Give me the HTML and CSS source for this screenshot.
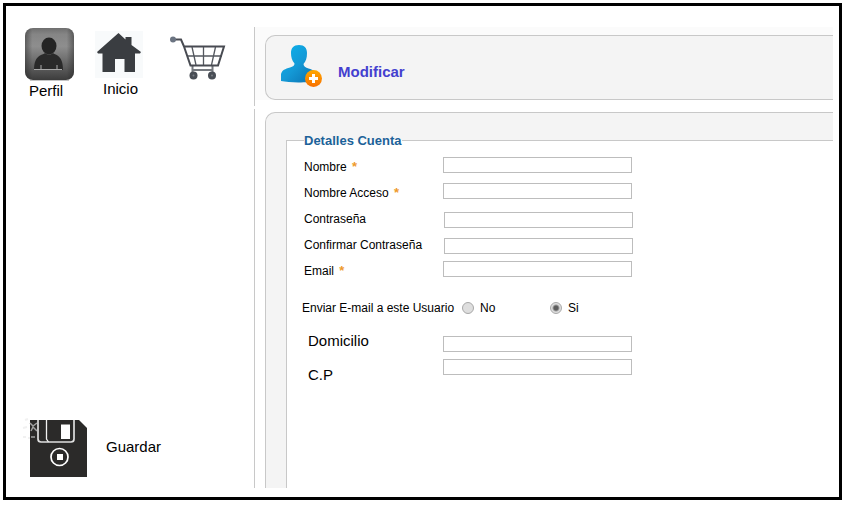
FILE: index.html
```html
<!DOCTYPE html>
<html lang="es">
<head>
<meta charset="utf-8">
<title>Modificar</title>
<link rel="stylesheet" href="styles.css">
</head>
<body>
<form class="frame">
  <aside class="sidebar">
    <nav class="nav">
      <a class="nav-item" href="#perfil">
        <svg width="49" height="55" viewBox="25 27 49 55" aria-hidden="true">
          <defs>
            <linearGradient id="tile" x1="0" y1="0" x2="0" y2="1">
              <stop offset="0" stop-color="#6f6f6f"/>
              <stop offset=".12" stop-color="#858585"/>
              <stop offset=".35" stop-color="#8e8e8e"/>
              <stop offset=".75" stop-color="#5e5e5e"/>
              <stop offset="1" stop-color="#3c3c3c"/>
            </linearGradient>
            <linearGradient id="edge" x1="0" y1="0" x2="1" y2="0">
              <stop offset="0" stop-color="#222" stop-opacity=".45"/>
              <stop offset=".15" stop-color="#222" stop-opacity="0"/>
              <stop offset=".85" stop-color="#222" stop-opacity="0"/>
              <stop offset="1" stop-color="#222" stop-opacity=".45"/>
            </linearGradient>
          </defs>
          <rect x="25" y="28" width="49" height="52" rx="8" fill="url(#tile)"/>
          <rect x="25" y="28" width="49" height="52" rx="8" fill="url(#edge)"/>
          <ellipse cx="49" cy="46" rx="7.5" ry="8.500" fill="#242424"/>
          <path d="M34 70c0-8 2-12 6-14.500 2-1.200 4-1.500 5-2.500 2.500 2 5.500 2 8 0 1 1 3 1.300 4.500 2.500 3.500 2.500 5.500 6.500 5.500 14.500z" fill="#2a2a2a"/>
          <path d="M34 69.500h28M41 65v4M57 65v4" stroke="#aaa" fill="none"/>
          <path d="M30 80.500h39" stroke="#c4c4c4"/>
        </svg>
        <span class="nav-label">Perfil</span>
      </a>
      <a class="nav-item" href="#inicio">
        <svg width="53" height="53" viewBox="95 27 53 53" aria-hidden="true">
          <rect x="95" y="31" width="48" height="47" fill="#f8fafb"/>
          <path d="M118.500 33l7 6.500V37h6v8l9.500 7-1 1.500h-5V72h-10.500V59h-9.500v13H102.500V53.500H98L97 52z" fill="#3a3d41"/>
        </svg>
        <span class="nav-label nav-label-wide">Inicio</span>
      </a>
      <a class="nav-item" href="#carrito" aria-label="Carrito">
        <svg width="57" height="54" viewBox="169 27 57 54" aria-hidden="true" fill="none">
          <path d="M192.500 66v8M212.500 66v8M193 70h20" stroke="#75797f" stroke-width="2"/>
          <path d="M187 56h35M192 47l4 18M203.500 47v18M215.500 47l-4 18" stroke="#54585f" stroke-width="1.300"/>
          <path d="M174 39.500h7l3 7h40l-6 19h-27.500l-6.500-19" stroke="#484b52" stroke-width="2"/>
          <circle cx="173" cy="39.500" r="3" fill="#6b7482"/>
          <circle cx="193.500" cy="75.500" r="4" fill="#484d55"/>
          <circle cx="212" cy="75.500" r="4" fill="#484d55"/>
          <circle cx="193.500" cy="75.500" r="1" fill="#7b7f86"/>
          <circle cx="212" cy="75.500" r="1" fill="#7b7f86"/>
        </svg>
      </a>
    </nav>
    <button class="save" type="submit">
      <svg width="65" height="64" viewBox="22 415 65 64" aria-hidden="true" fill="none">
        <path d="M30 420h49l8 8v49H30z" fill="#2b2a29"/>
        <path d="M25 420l3-1M23 428l4-1M23 437h3M28 438h2" stroke="#f1f1f1" stroke-width="2"/>
        <path d="M30 423l3 3 4-3M31 431l2-4 4 4M31 437h4" stroke="#a0a0a0" stroke-width="1.500"/>
        <path d="M38 420v19q0 3 3 3h30q3 0 3-3v-19" stroke="#dedede" stroke-width="1.700"/>
        <path d="M46.500 420v19l2 3" stroke="#f2f2f2" stroke-width="1.300"/>
        <path d="M61 424.500h9V439h-9z" fill="#fff"/>
        <circle cx="59.500" cy="457" r="8.500" stroke="#fff" stroke-width="1.700"/>
        <path d="M57 454h6v6h-6z" fill="#fff"/>
      </svg>
      <span>Guardar</span>
    </button>
  </aside>
  <main class="main">
    <header class="top">
      <div class="top-band">
        <div class="title-card">
          <svg width="43" height="43" viewBox="281 44 43 43" aria-hidden="true">
            <defs>
              <linearGradient id="person" x1="0" y1="0" x2="1" y2="1">
                <stop offset="0" stop-color="#0ab4ee"/>
                <stop offset=".5" stop-color="#1499d6"/>
                <stop offset="1" stop-color="#0a6cab"/>
              </linearGradient>
              <linearGradient id="badge" x1="0" y1="0" x2="0" y2="1">
                <stop offset="0" stop-color="#ffa800"/>
                <stop offset="1" stop-color="#f87000"/>
              </linearGradient>
            </defs>
            <path d="M299 45c5.500 0 8 3 8 8 0 5-1 8-3.500 11 0 2.500 2 3.500 5 4.500 5 1.500 8.500 3.500 8.500 9v3c-8 2.500-27 2.500-36 .500V74c1-4 4-5 9-6.500 3-1 4.500-1.500 4.500-4-2.500-3-3.500-6-3.500-10.500 0-5 2.500-8 8-8z" fill="url(#person)"/>
            <circle cx="313.500" cy="78.500" r="8.500" fill="url(#badge)"/>
            <path d="M313.500 74v9M309 78.500h9" stroke="#fff" stroke-width="3"/>
          </svg>
          <h1 class="title">Modificar</h1>
        </div>
      </div>
    </header>
    <section class="content">
      <div class="panel">
        <fieldset class="account">
          <legend>Detalles Cuenta</legend>
          <div class="field required">
            <label for="nombre">Nombre <b class="star">*</b></label>
            <input class="box" id="nombre" type="text">
          </div>
          <div class="field required">
            <label for="acceso">Nombre Acceso <b class="star">*</b></label>
            <input class="box" id="acceso" type="text">
          </div>
          <div class="field optional">
            <label for="clave">Contraseña</label>
            <input class="box" id="clave" type="password">
          </div>
          <div class="field optional">
            <label for="clave2">Confirmar Contraseña</label>
            <input class="box" id="clave2" type="password">
          </div>
          <div class="field required">
            <label for="email">Email <b class="star">*</b></label>
            <input class="box" id="email" type="email">
          </div>
          <div class="choice" role="radiogroup" aria-labelledby="enviar">
            <span id="enviar">Enviar E-mail a este Usuario</span>
            <label class="option"><input type="radio" name="enviar" value="no">No</label>
            <label class="option"><input type="radio" name="enviar" value="si" checked>Si</label>
          </div>
          <div class="address">
            <div class="address-labels">
              <label for="domicilio">Domicilio</label>
              <label for="cp">C.P</label>
            </div>
            <div class="address-boxes">
              <input class="box" id="domicilio" type="text">
              <input class="box" id="cp" type="text">
            </div>
          </div>
        </fieldset>
      </div>
    </section>
  </main>
</form>
</body>
</html>
```
FILE: styles.css
```css
* {
  box-sizing: border-box;
}

body {
  margin: 0;
  background: #fff;
  color: #000;
  font: 12px/16px "Liberation Sans", Arial, sans-serif;
}

.frame {
  display: grid;
  grid-template-columns: 248px 1fr;
  min-height: calc(100vh - 8px);
  margin: 3px 5px 5px 3px;
  padding: 21px 6px 9px 0;
  border: 3px solid #000;
}

svg {
  display: block;
  flex: none;
}

/* Sidebar */
.sidebar {
  display: flex;
  flex-direction: column;
  justify-content: space-between;
  align-items: flex-start;
  padding: 0 0 9px 16px;
}

.nav {
  display: flex;
  align-items: flex-start;
  gap: 21px;
  padding-left: 3px;
}

.nav-item {
  color: #000;
  font-size: 15px;
  line-height: 18px;
  text-decoration: none;
}

.nav-label {
  display: block;
  padding-left: 4px;
}

.nav-label-wide {
  padding-left: 8px;
}

.save {
  display: flex;
  align-items: center;
  gap: 19px;
  padding: 0;
  border: 0;
  background: none;
  color: #000;
  font: 15px/18px "Liberation Sans", Arial, sans-serif;
}

/* Main column */
.main {
  display: flex;
  flex-direction: column;
  gap: 3px;
}

.top,
.content {
  border-left: 1px solid #c8c8c8;
}

.top {
  padding-bottom: 6px;
}

.top-band {
  padding: 8px 0 0 10px;
  background: #fbfbfb;
}

.title-card {
  display: flex;
  align-items: flex-end;
  gap: 14px;
  padding: 8px 15px 12px;
  border: 1px solid #c8c8c8;
  border-right: 0;
  border-radius: 10px 0 0 10px;
  background: #f4f4f4;
}

.title {
  margin: 0;
  color: #4340cf;
  font-size: 15px;
  line-height: 30px;
}

.content {
  display: flex;
  flex: 1;
  padding: 3px 0 0 10px;
}

.panel {
  display: flex;
  flex: 1;
  padding: 20px 0 0 20px;
  border: 1px solid #c8c8c8;
  border-width: 1px 0 0 1px;
  border-radius: 10px 0 0 0;
  background: #f4f4f4;
}

/* Account form */
.account {
  flex: 1;
  min-width: 0;
  margin: 0;
  padding: 6px 15px 0;
  border: 1px solid #c8c8c8;
  border-width: 1px 0 0 1px;
  background: #fff;
}

legend {
  margin-left: 2px;
  padding: 0;
  color: #1c6299;
  font-size: 13px;
  font-weight: bold;
  line-height: 15px;
}

.field {
  display: grid;
  grid-template-columns: 139px 189px;
  align-items: center;
  height: 26px;
  padding-left: 2px;
}

.star {
  margin-left: 2px;
  color: #ee9a2c;
  font-size: 13px;
}

.box {
  width: 189px;
  height: 16px;
  padding: 0 3px;
  border: 1px solid #bdbdbd;
  border-radius: 0;
  background: #fff;
  font: 12px/14px "Liberation Sans", Arial, sans-serif;
}

.required .box {
  margin-bottom: 4px;
}

.optional .box {
  margin: 2px 0 0 1px;
}

.choice {
  display: grid;
  grid-template-columns: 160px 88px auto;
  justify-content: start;
  margin-top: 16px;
}

.option {
  display: flex;
  align-items: center;
  gap: 6px;
}

.option input {
  appearance: none;
  width: 12px;
  height: 12px;
  margin: 0;
  border: 1px solid #a8a8a8;
  border-radius: 50%;
  background: #dedede;
}

.option input:checked {
  background: radial-gradient(circle, #5c5c5c 2px, #dedede 4px);
}

.address {
  display: grid;
  grid-template-columns: 135px 189px;
  margin-top: 16px;
  padding-left: 6px;
}

.address-labels {
  display: flex;
  flex-direction: column;
  gap: 16px;
  font-size: 15px;
  line-height: 18px;
}

.address-boxes {
  display: flex;
  flex-direction: column;
  gap: 7px;
  padding-top: 4px;
}
```
